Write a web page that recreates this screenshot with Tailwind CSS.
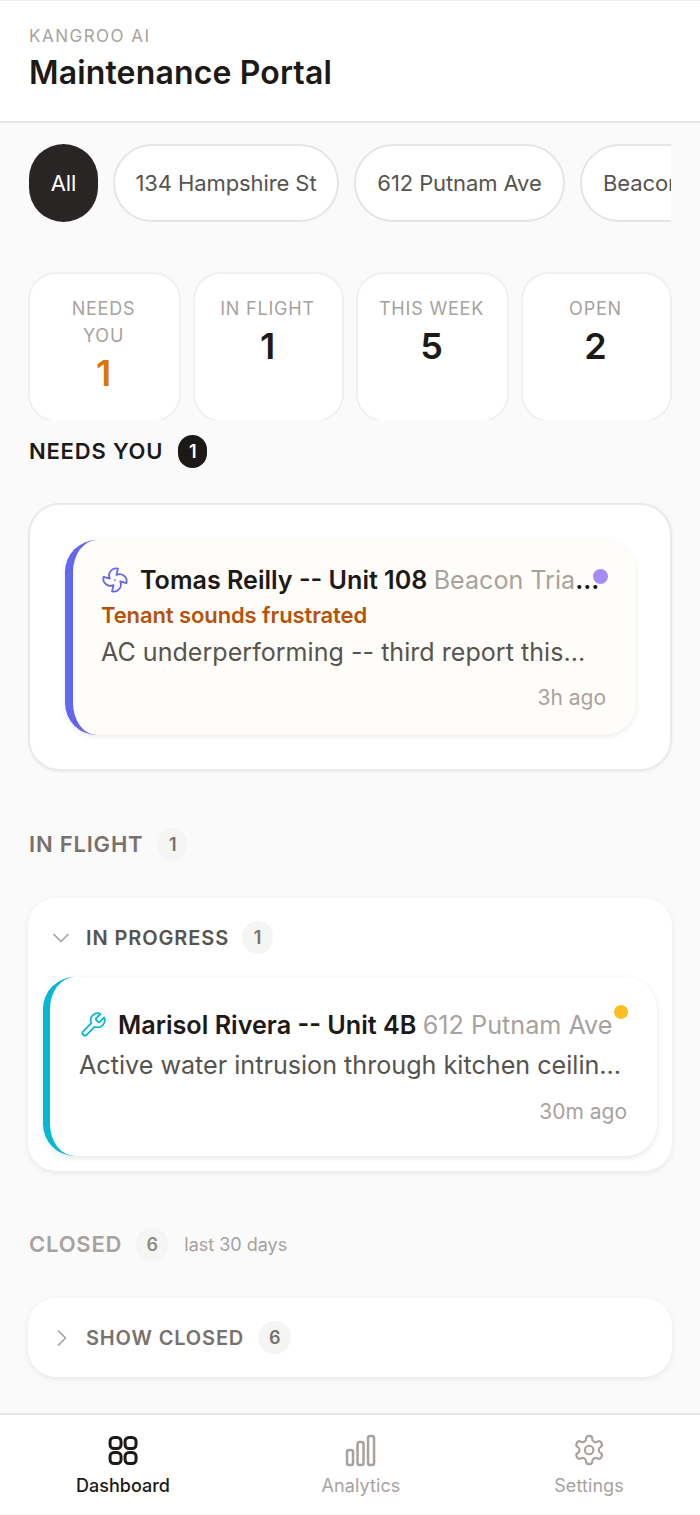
<!DOCTYPE html>
<html>
<head>
    <title>Maintenance Portal</title>
    <script src="https://cdn.jsdelivr.net/npm/@tailwindcss/browser@4"></script>
</head>
<body class="bg-[#fafafa] font-['Inter',sans-serif] text-[#1c1917]">
<div class="w-[700px] h-[1515px] flex flex-col overflow-hidden">
    <header class="h-[123px] shrink-0 bg-white border-t border-[#f0efee] border-b-2 border-b-[#e7e5e4] pl-[29px] pt-[25px]">
        <div class="text-[17px] leading-[20px] tracking-[1.5px] text-[#a8a29e]">KANGROO AI</div>
        <h1 class="text-[32px] leading-[40px] font-semibold mt-[7px] tracking-[0.15px]">Maintenance Portal</h1>
    </header>

    <main class="flex-1 px-[28px] min-h-0">
        <!-- property filter chips -->
        <div class="flex gap-[15px] mt-[21px] overflow-hidden w-[643px] pl-px text-[22px] tracking-[-0.1px]">
            <div class="shrink-0 w-[69px] h-[78px] rounded-full bg-[#292524] text-white flex items-center justify-center">All</div>
            <div class="shrink-0 w-[226px] h-[78px] rounded-full bg-white border-2 border-[#e7e5e4] text-[#57534e] flex items-center justify-center">134 Hampshire St</div>
            <div class="shrink-0 w-[211px] h-[78px] rounded-full bg-white border-2 border-[#e7e5e4] text-[#57534e] flex items-center justify-center">612 Putnam Ave</div>
            <div class="shrink-0 w-[220px] h-[78px] rounded-full bg-white border-2 border-[#e7e5e4] text-[#57534e] flex items-center pl-[21px]">Beacon Triangle</div>
        </div>

        <!-- stats -->
        <div class="grid grid-cols-[153px_151px_153px_151px] gap-[12px] mt-[50px] h-[148px] overflow-hidden">
            <div class="h-[150px] rounded-[28px] bg-white border-2 border-[#f1f0ef] text-center pt-[21px] pr-[2px]">
                <div class="text-[18px] leading-[27px] tracking-[0.8px] text-[#a8a29e]">NEEDS<br>YOU</div>
                <div class="text-[36px] leading-[40px] font-semibold text-[#d97706] mt-[4px]">1</div>
            </div>
            <div class="h-[150px] rounded-[28px] bg-white border-2 border-[#f1f0ef] text-center pt-[21px] pr-[2px]">
                <div class="text-[18px] leading-[27px] tracking-[0.8px] text-[#a8a29e]">IN FLIGHT</div>
                <div class="text-[36px] leading-[40px] font-semibold mt-[4px]">1</div>
            </div>
            <div class="h-[150px] rounded-[28px] bg-white border-2 border-[#f1f0ef] text-center pt-[21px] pr-[2px]">
                <div class="text-[18px] leading-[27px] tracking-[0.8px] text-[#a8a29e]">THIS WEEK</div>
                <div class="text-[36px] leading-[40px] font-semibold mt-[4px]">5</div>
            </div>
            <div class="h-[150px] rounded-[28px] bg-white border-2 border-[#f1f0ef] text-center pt-[21px] pr-[2px]">
                <div class="text-[18px] leading-[27px] tracking-[0.8px] text-[#a8a29e]">OPEN</div>
                <div class="text-[36px] leading-[40px] font-semibold mt-[4px]">2</div>
            </div>
        </div>

        <!-- needs you -->
        <div class="flex items-center gap-[15px] mt-[15px] pl-px h-[33px]">
            <span class="text-[22px] leading-[31px] font-semibold tracking-[0.8px]">NEEDS YOU</span>
            <span class="w-[29px] h-[33px] rounded-full bg-[#1c1917] text-white text-[18px] font-semibold flex items-center justify-center">1</span>
        </div>
        <section class="mt-[35px] h-[268px] rounded-[32px] bg-white border-2 border-[#ebeae9] shadow-[0_1px_3px_rgba(0,0,0,0.06)] pt-[35px] pl-[35px] pr-[34px]">
            <div class="relative h-[195px] rounded-[32px] bg-[#fffdf9] border-l-[8px] border-[#6366f1] shadow-[0_2px_6px_rgba(0,0,0,0.08)] pl-[28px] pr-[30px] pt-[22px]">
                <span class="absolute right-[28px] top-[29px] w-[15px] h-[15px] rounded-full bg-[#a78bfa]"></span>
                <div class="flex items-center gap-[11px] h-[36px] pr-[3px]">
                    <svg class="shrink-0 w-[28px] h-[28px] text-[#6366f1]" viewBox="0 0 24 24" fill="none" stroke="currentColor" stroke-width="1.5" stroke-linecap="round" stroke-linejoin="round"><path d="M10.827 16.379a6.082 6.082 0 0 1-8.618-7.002l5.412 1.45a6.082 6.082 0 0 1 7.002-8.618l-1.45 5.412a6.082 6.082 0 0 1 8.618 7.002l-5.412-1.45a6.082 6.082 0 0 1-7.002 8.618l1.45-5.412Z"/><path d="M12 12v.01"/></svg>
                    <div class="truncate text-[25.1px] leading-[36px] font-semibold">Tomas Reilly -- Unit 108 <span class="font-normal text-[#a8a29e]">Beacon Triangle</span></div>
                </div>
                <div class="text-[22px] leading-[30px] font-semibold tracking-[-0.1px] text-[#b45309] mt-[2px]">Tenant sounds frustrated</div>
                <div class="text-[25px] leading-[42px] tracking-[0.05px] text-[#57534e] truncate mt-[1px]">AC underperforming -- third report this...</div>
                <div class="text-[21px] leading-[30px] text-[#a8a29e] text-right mt-[10px]">3h ago</div>
            </div>
        </section>

        <!-- in flight -->
        <div class="flex items-center gap-[15px] mt-[57px] pl-px h-[33px]">
            <span class="text-[22px] leading-[31px] font-semibold tracking-[0.8px] text-[#78716c]">IN FLIGHT</span>
            <span class="w-[29px] h-[33px] rounded-full bg-[#f5f5f4] text-[#78716c] text-[18px] font-semibold flex items-center justify-center">1</span>
        </div>
        <section class="mt-[37px] h-[273px] rounded-[28px] bg-white shadow-[0_2px_6px_rgba(0,0,0,0.08)] px-[15px]">
            <div class="flex items-center h-[79px] pl-[4px]">
                <svg class="w-[28px] h-[28px] text-[#a8a29e]" viewBox="0 0 24 24" fill="none" stroke="currentColor" stroke-width="1.5" stroke-linecap="round" stroke-linejoin="round"><path d="m6 9 6 6 6-6"/></svg>
                <span class="ml-[11px] text-[20px] font-semibold tracking-[0.9px] text-[#57534e]">IN PROGRESS</span>
                <span class="ml-[13px] w-[31px] h-[33px] rounded-full bg-[#f5f5f4] text-[#78716c] text-[18px] font-semibold flex items-center justify-center">1</span>
            </div>
            <div class="relative h-[179px] rounded-[32px] bg-white border-l-[7px] border-[#06b6d4] shadow-[0_2px_6px_rgba(0,0,0,0.1)] pl-[29px] pr-[30px] pt-[30px]">
                <span class="absolute right-[29px] top-[28px] w-[14px] h-[14px] rounded-full bg-[#fbbf24]"></span>
                <div class="flex items-center gap-[11px] h-[36px]">
                    <svg class="shrink-0 w-[28px] h-[28px] text-[#06b6d4]" viewBox="0 0 24 24" fill="none" stroke="currentColor" stroke-width="1.5" stroke-linecap="round" stroke-linejoin="round"><path d="M14.7 6.3a1 1 0 0 0 0 1.4l1.6 1.6a1 1 0 0 0 1.4 0l3.77-3.77a6 6 0 0 1-7.94 7.94l-6.91 6.91a2.12 2.12 0 0 1-3-3l6.91-6.91a6 6 0 0 1 7.94-7.94l-3.76 3.76z"/></svg>
                    <div class="truncate text-[25.2px] leading-[36px] font-semibold">Marisol Rivera -- Unit 4B <span class="font-normal text-[#a8a29e]">612 Putnam Ave</span></div>
                </div>
                <div class="text-[25.15px] leading-[42px] text-[#57534e] truncate mt-[1px]">Active water intrusion through kitchen ceilin...</div>
                <div class="text-[21px] leading-[30px] text-[#a8a29e] text-right mt-[11px]">30m ago</div>
            </div>
        </section>

        <!-- closed -->
        <div class="flex items-center mt-[57px] pl-px h-[33px]">
            <span class="text-[22px] leading-[31px] font-semibold tracking-[0.8px] text-[#a8a29e]">CLOSED</span>
            <span class="ml-[14px] w-[32px] h-[33px] rounded-full bg-[#f5f5f4] text-[#8f8a85] text-[18px] font-semibold flex items-center justify-center">6</span>
            <span class="ml-[16px] text-[18px] text-[#a8a29e]">last 30 days</span>
        </div>
        <section class="mt-[37px] h-[79px] rounded-[28px] bg-white shadow-[0_2px_6px_rgba(0,0,0,0.08)] flex items-center pl-[20px]">
            <svg class="w-[28px] h-[28px] text-[#a8a29e]" viewBox="0 0 24 24" fill="none" stroke="currentColor" stroke-width="1.5" stroke-linecap="round" stroke-linejoin="round"><path d="m9 18 6-6-6-6"/></svg>
            <span class="ml-[10px] text-[20px] font-semibold tracking-[0.85px] text-[#78716c]">SHOW CLOSED</span>
            <span class="ml-[14px] w-[33px] h-[33px] rounded-full bg-[#f5f5f4] text-[#78716c] text-[18px] font-semibold flex items-center justify-center">6</span>
        </section>
    </main>

    <!-- bottom nav -->
    <nav class="h-[102px] shrink-0 bg-white border-t-2 border-[#e7e5e4] border-b border-b-[#f0efee] relative">
        <div class="absolute left-[123px] top-[18px] -translate-x-1/2 flex flex-col items-center">
            <svg class="w-[34px] h-[34px] text-[#1c1917]" viewBox="0 0 34 34" fill="none" stroke="currentColor" stroke-width="3"><rect x="4" y="4.5" width="11" height="11" rx="4"/><rect x="19" y="4.5" width="11" height="11" rx="4"/><rect x="4" y="19.5" width="11" height="11" rx="4"/><rect x="19" y="19.5" width="11" height="11" rx="4"/></svg>
            <span class="text-[18px] leading-[26px] font-medium mt-[6px] whitespace-nowrap">Dashboard</span>
        </div>
        <div class="absolute left-[361px] top-[18px] -translate-x-1/2 flex flex-col items-center text-[#a8a29e]">
            <svg class="w-[34px] h-[34px]" viewBox="0 0 34 34" fill="none" stroke="currentColor" stroke-width="2.5"><rect x="3.5" y="17" width="6" height="15" rx="2"/><rect x="14" y="9" width="6" height="23" rx="2"/><rect x="24.5" y="3" width="6" height="29" rx="2"/></svg>
            <span class="text-[18px] leading-[26px] tracking-[0.1px] mt-[6px] whitespace-nowrap">Analytics</span>
        </div>
        <div class="absolute left-[589px] top-[18px] -translate-x-1/2 flex flex-col items-center text-[#a8a29e]">
            <svg class="w-[34px] h-[34px]" viewBox="0 0 24 24" fill="none" stroke="currentColor" stroke-width="1.5" stroke-linecap="round" stroke-linejoin="round"><path d="M12.22 2h-.44a2 2 0 0 0-2 2v.18a2 2 0 0 1-1 1.73l-.43.25a2 2 0 0 1-2 0l-.15-.08a2 2 0 0 0-2.73.73l-.22.38a2 2 0 0 0 .73 2.73l.15.1a2 2 0 0 1 1 1.72v.51a2 2 0 0 1-1 1.74l-.15.09a2 2 0 0 0-.73 2.73l.22.38a2 2 0 0 0 2.73.73l.15-.08a2 2 0 0 1 2 0l.43.25a2 2 0 0 1 1 1.73V20a2 2 0 0 0 2 2h.44a2 2 0 0 0 2-2v-.18a2 2 0 0 1 1-1.73l.43-.25a2 2 0 0 1 2 0l.15.08a2 2 0 0 0 2.73-.73l.22-.39a2 2 0 0 0-.73-2.73l-.15-.08a2 2 0 0 1-1-1.74v-.5a2 2 0 0 1 1-1.74l.15-.09a2 2 0 0 0 .73-2.73l-.22-.38a2 2 0 0 0-2.73-.73l-.15.08a2 2 0 0 1-2 0l-.43-.25a2 2 0 0 1-1-1.73V4a2 2 0 0 0-2-2z"/><circle cx="12" cy="12" r="3"/></svg>
            <span class="text-[18px] leading-[26px] tracking-[0.1px] mt-[6px] whitespace-nowrap">Settings</span>
        </div>
    </nav>
</div>
</body>
</html>
